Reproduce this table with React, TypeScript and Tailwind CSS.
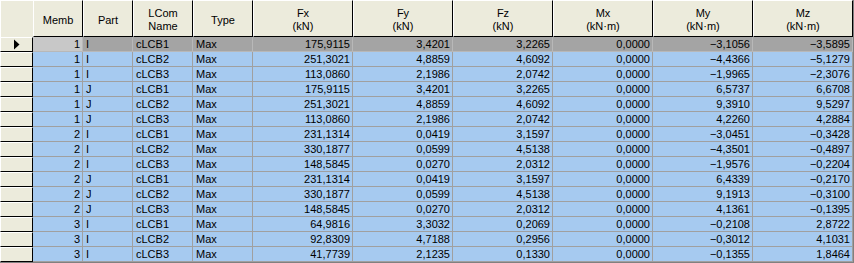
import React from "react";

type Col = { key: string; w: string; h1: string; h2?: string; align: "l" | "r" };

const cols: Col[] = [
  { key: "memb", w: "w-[50px]", h1: "Memb", align: "r" },
  { key: "part", w: "w-[50px]", h1: "Part", align: "l" },
  { key: "lcom", w: "w-[60px]", h1: "LCom", h2: "Name", align: "l" },
  { key: "type", w: "w-[60px]", h1: "Type", align: "l" },
  { key: "fx", w: "w-[100px]", h1: "Fx", h2: "(kN)", align: "r" },
  { key: "fy", w: "w-[100px]", h1: "Fy", h2: "(kN)", align: "r" },
  { key: "fz", w: "w-[100px]", h1: "Fz", h2: "(kN)", align: "r" },
  { key: "mx", w: "w-[100px]", h1: "Mx", h2: "(kN·m)", align: "r" },
  { key: "my", w: "w-[100px]", h1: "My", h2: "(kN·m)", align: "r" },
  { key: "mz", w: "w-[100px]", h1: "Mz", h2: "(kN·m)", align: "r" },
];

const raw = `1 I cLCB1 Max 175,9115 3,4201 3,2265 0,0000 -3,1056 -3,5895
1 I cLCB2 Max 251,3021 4,8859 4,6092 0,0000 -4,4366 -5,1279
1 I cLCB3 Max 113,0860 2,1986 2,0742 0,0000 -1,9965 -2,3076
1 J cLCB1 Max 175,9115 3,4201 3,2265 0,0000 6,5737 6,6708
1 J cLCB2 Max 251,3021 4,8859 4,6092 0,0000 9,3910 9,5297
1 J cLCB3 Max 113,0860 2,1986 2,0742 0,0000 4,2260 4,2884
2 I cLCB1 Max 231,1314 0,0419 3,1597 0,0000 -3,0451 -0,3428
2 I cLCB2 Max 330,1877 0,0599 4,5138 0,0000 -4,3501 -0,4897
2 I cLCB3 Max 148,5845 0,0270 2,0312 0,0000 -1,9576 -0,2204
2 J cLCB1 Max 231,1314 0,0419 3,1597 0,0000 6,4339 -0,2170
2 J cLCB2 Max 330,1877 0,0599 4,5138 0,0000 9,1913 -0,3100
2 J cLCB3 Max 148,5845 0,0270 2,0312 0,0000 4,1361 -0,1395
3 I cLCB1 Max 64,9816 3,3032 0,2069 0,0000 -0,2108 2,8722
3 I cLCB2 Max 92,8309 4,7188 0,2956 0,0000 -0,3012 4,1031
3 I cLCB3 Max 41,7739 2,1235 0,1330 0,0000 -0,1355 1,8464`;

const rows = raw.split("\n").map((l) => l.trim().split(" ").map((v) => v.replace(/^-/, "\u2212")));

const font = { fontFamily: '"Liberation Sans", Arial, sans-serif' };

export default function App() {
  return (
    <div className="w-[854px] h-[263px] bg-[#808080] overflow-hidden text-[11px] text-black" style={font}>
      {/* header */}
      <div className="flex">
        <div className="w-[33px] h-[37px] box-border border-t border-l border-white border-r-black border-b-black bg-[#ecebdc]" />
        {cols.map((c) => (
          <div
            key={c.key}
            className={`${c.w} h-[37px] box-border border-t border-l border-r border-b border-t-white border-l-white border-r-black border-b-black bg-[#ecebdc] flex flex-col items-center justify-center pt-[3px] leading-[13px]`}
          >
            <span>{c.h1}</span>
            {c.h2 && <span>{c.h2}</span>}
          </div>
        ))}
      </div>
      {rows.map((r, i) => {
        const sel = i === 0;
        return (
          <div key={i} className="flex">
            <div className="w-[33px] h-[15px] box-border border border-t-white border-l-white border-r-black border-b-black bg-[#ecebdc] relative">
              {sel && (
                <svg className="absolute left-[13px] top-[1px]" width="6" height="11" viewBox="0 0 6 11">
                  <polygon points="0,0.5 5.5,5.5 0,10.5" fill="#000" />
                </svg>
              )}
            </div>
            {cols.map((c, j) => {
              const bg = sel ? (j === 0 ? "bg-[#c8c8c8]" : "bg-[#a4a4a4]") : "bg-[#a6caf0]";
              const bd = sel ? "border-[#b8b8b8]" : "border-[#a0a0a0]";
              return (
                <div
                  key={c.key}
                  className={`${c.w} h-[15px] box-border border-r border-b ${bd} ${bg} leading-[14px] whitespace-nowrap overflow-hidden ${
                    c.align === "r" ? "text-right pr-[2px]" : "text-left pl-[3px]"
                  }`}
                >
                  {r[j]}
                </div>
              );
            })}
          </div>
        );
      })}
    </div>
  );
}
